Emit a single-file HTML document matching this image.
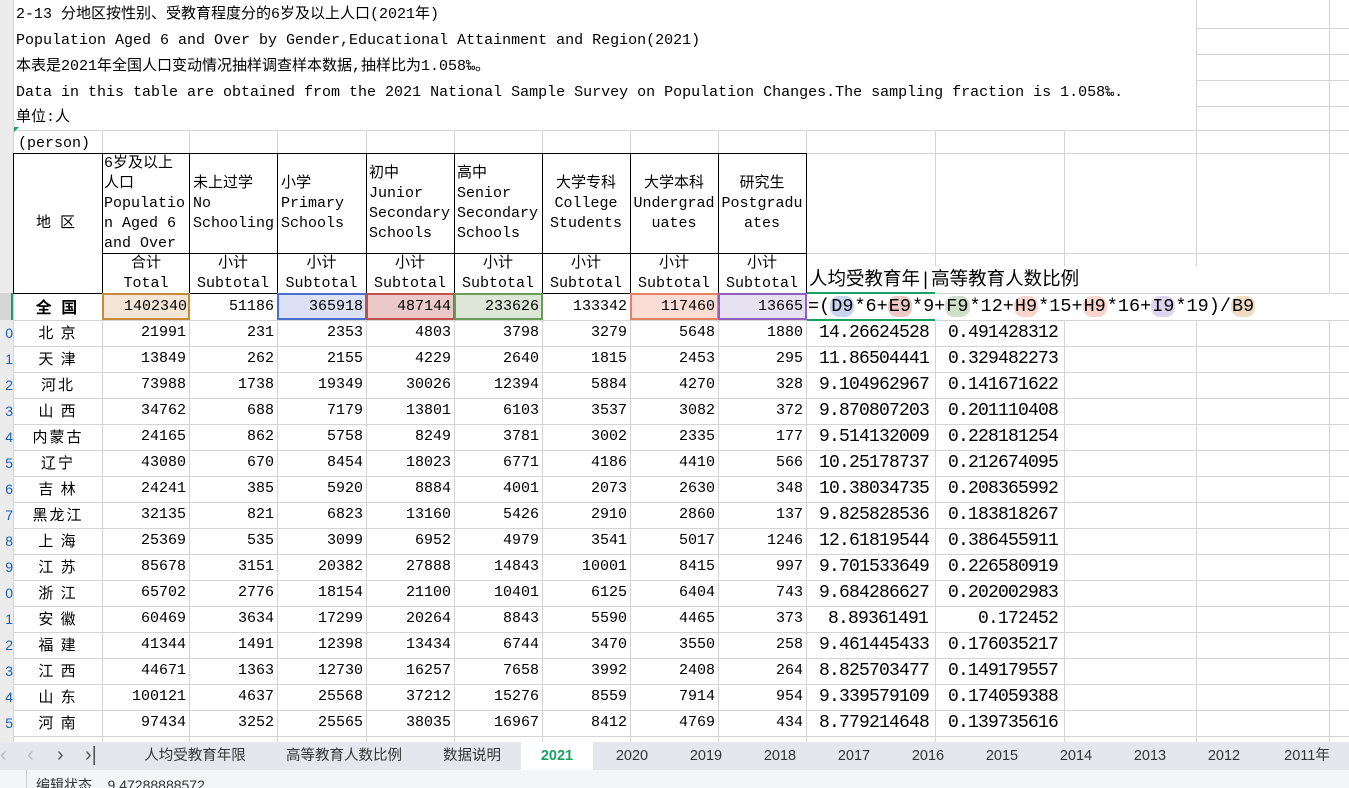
<!DOCTYPE html>
<html><head><meta charset="utf-8">
<style>
*{margin:0;padding:0;box-sizing:border-box}
body{width:1349px;height:788px;overflow:hidden;background:#fff;position:relative;font-family:"Liberation Mono","Noto Sans CJK SC",monospace;font-size:15px;color:#000}
.vl{position:absolute;top:0;width:1px;height:742px;background:#d4d4d4}
.hl{position:absolute;left:0;width:1349px;height:1px;background:#d4d4d4}
.t{position:absolute;white-space:nowrap;line-height:26px}
.c{position:absolute;white-space:nowrap;text-align:right;padding-right:3px;line-height:26px;height:26px}
.bk{position:absolute;background:#000}
.rn{position:absolute;left:0;width:13px;background:#ececec;overflow:hidden;font-family:"Liberation Sans",sans-serif;font-size:14px;color:#1a5fb4;text-align:right;line-height:26px;height:26px}
.hd{position:absolute;white-space:nowrap;line-height:20px;font-size:15px}
.f{font-size:18.5px;font-family:"Liberation Mono","Noto Sans CJK SC",monospace}
.p{border-radius:9px;padding:0 1px}
.tab{position:absolute;top:742px;height:28px;line-height:28px;font-family:"Liberation Sans","Noto Sans CJK SC",sans-serif;font-size:14.5px;color:#333;text-align:center}
table{border-collapse:collapse;table-layout:fixed;width:1045px}
td{height:26px;padding:0 3px;text-align:right;white-space:nowrap;line-height:26px;overflow:visible}
td:first-child{text-align:center;font-family:"Noto Sans CJK SC",sans-serif;font-size:15px;letter-spacing:2px}
td.j{font-size:18px;text-align:left;padding-left:13px;letter-spacing:-0.8px}
td.k{font-size:18px;padding-right:6px;letter-spacing:-0.8px}
</style></head><body>
<div class="vl" style="left:13px"></div><div class="vl" style="left:102px"></div><div class="vl" style="left:189px"></div><div class="vl" style="left:277px"></div><div class="vl" style="left:366px"></div><div class="vl" style="left:454px"></div><div class="vl" style="left:542px"></div><div class="vl" style="left:630px"></div><div class="vl" style="left:718px"></div><div class="vl" style="left:806px"></div><div class="vl" style="left:935px"></div><div class="vl" style="left:1064px"></div><div class="vl" style="left:1196px"></div><div class="vl" style="left:1329px"></div>
<div class="hl" style="top:28px"></div><div class="hl" style="top:54px"></div><div class="hl" style="top:80px"></div><div class="hl" style="top:106px"></div><div class="hl" style="top:130px"></div><div class="hl" style="top:153px"></div><div class="hl" style="top:253px"></div><div class="hl" style="top:293px"></div>
<div class="hl" style="top:320px"></div><div class="hl" style="top:346px"></div><div class="hl" style="top:372px"></div><div class="hl" style="top:398px"></div><div class="hl" style="top:424px"></div><div class="hl" style="top:450px"></div><div class="hl" style="top:476px"></div><div class="hl" style="top:502px"></div><div class="hl" style="top:528px"></div><div class="hl" style="top:554px"></div><div class="hl" style="top:580px"></div><div class="hl" style="top:606px"></div><div class="hl" style="top:632px"></div><div class="hl" style="top:658px"></div><div class="hl" style="top:684px"></div><div class="hl" style="top:710px"></div><div class="hl" style="top:736px"></div>
<div style="position:absolute;left:14px;top:0;width:1182px;height:130px;background:#fff"></div>
<div class="rn" style="top:0;height:742px"></div>
<div class="rn" style="top:293px;height:27px;background:#d6d6d6;border-right:2px solid #1aa260"></div>
<div class="rn" style="top:320px">0</div><div class="rn" style="top:346px">1</div><div class="rn" style="top:372px">2</div><div class="rn" style="top:398px">3</div><div class="rn" style="top:424px">4</div><div class="rn" style="top:450px">5</div><div class="rn" style="top:476px">6</div><div class="rn" style="top:502px">7</div><div class="rn" style="top:528px">8</div><div class="rn" style="top:554px">9</div><div class="rn" style="top:580px">0</div><div class="rn" style="top:606px">1</div><div class="rn" style="top:632px">2</div><div class="rn" style="top:658px">3</div><div class="rn" style="top:684px">4</div><div class="rn" style="top:710px">5</div>
<div class="t" style="left:16px;top:2px">2-13 分地区按性别、受教育程度分的6岁及以上人口(2021年)</div>
<div class="t" style="left:16px;top:28px">Population Aged 6 and Over by Gender,Educational Attainment and Region(2021)</div>
<div class="t" style="left:16px;top:54px">本表是2021年全国人口变动情况抽样调查样本数据,抽样比为1.058‰。</div>
<div class="t" style="left:16px;top:80px">Data in this table are obtained from the 2021 National Sample Survey on Population Changes.The sampling fraction is 1.058‰.</div>
<div class="t" style="left:16px;top:105px">单位:人</div>
<div style="position:absolute;left:14px;top:127px;width:0;height:0;border-top:5px solid #1aa260;border-right:5px solid transparent"></div>
<div class="t" style="left:18px;top:131px;height:22px;overflow:hidden">(person)</div>
<div style="position:absolute;left:14px;top:154px;width:792px;height:139px;background:#fff"></div>
<div class="bk" style="left:13px;top:153px;width:793px;height:1px"></div>
<div class="bk" style="left:102px;top:253px;width:704px;height:1px"></div>
<div class="bk" style="left:13px;top:293px;width:793px;height:1px"></div>
<div class="bk" style="left:13px;top:153px;width:1px;height:140px"></div>
<div class="bk" style="left:102px;top:153px;width:1px;height:140px"></div>
<div class="bk" style="left:189px;top:153px;width:1px;height:140px"></div>
<div class="bk" style="left:277px;top:153px;width:1px;height:140px"></div>
<div class="bk" style="left:366px;top:153px;width:1px;height:140px"></div>
<div class="bk" style="left:454px;top:153px;width:1px;height:140px"></div>
<div class="bk" style="left:542px;top:153px;width:1px;height:140px"></div>
<div class="bk" style="left:630px;top:153px;width:1px;height:140px"></div>
<div class="bk" style="left:718px;top:153px;width:1px;height:140px"></div>
<div class="bk" style="left:806px;top:153px;width:1px;height:140px"></div>
<div class="hd" style="left:36px;top:214px">地 区</div>
<div class="hd" style="left:104px;top:154px">6岁及以上<br>人口<br>Populatio<br>n Aged 6<br>and Over</div>
<div class="hd" style="left:193px;top:174px">未上过学<br>No<br>Schooling</div>
<div class="hd" style="left:281px;top:174px">小学<br>Primary<br>Schools</div>
<div class="hd" style="left:369px;top:164px">初中<br>Junior<br>Secondary<br>Schools</div>
<div class="hd" style="left:457px;top:164px">高中<br>Senior<br>Secondary<br>Schools</div>
<div class="hd" style="left:542px;width:88px;text-align:center;top:174px">大学专科<br>College<br>Students</div>
<div class="hd" style="left:630px;width:88px;text-align:center;top:174px">大学本科<br>Undergrad<br>uates</div>
<div class="hd" style="left:718px;width:88px;text-align:center;top:174px">研究生<br>Postgradu<br>ates</div>
<div class="hd" style="left:102px;width:88px;text-align:center;top:254px">合计<br>Total</div>
<div class="hd" style="left:189px;width:88px;text-align:center;top:254px">小计<br>Subtotal</div>
<div class="hd" style="left:277px;width:89px;text-align:center;top:254px">小计<br>Subtotal</div>
<div class="hd" style="left:366px;width:88px;text-align:center;top:254px">小计<br>Subtotal</div>
<div class="hd" style="left:454px;width:88px;text-align:center;top:254px">小计<br>Subtotal</div>
<div class="hd" style="left:542px;width:88px;text-align:center;top:254px">小计<br>Subtotal</div>
<div class="hd" style="left:630px;width:88px;text-align:center;top:254px">小计<br>Subtotal</div>
<div class="hd" style="left:718px;width:88px;text-align:center;top:254px">小计<br>Subtotal</div>
<div style="position:absolute;left:807px;top:266px;width:400px;height:27px;background:#fff"></div>
<div class="t f" style="left:809px;top:268px">人均受教育年|高等教育人数比例</div>
<div style="position:absolute;left:807px;top:292px;width:128px;height:2px;background:#1aa260"></div>
<div style="position:absolute;left:102px;top:293px;width:88px;height:27px;background:#f3e6d6;border:2px solid #c8893a"></div>
<div style="position:absolute;left:277px;top:293px;width:90px;height:27px;background:#dce1f3;border:2px solid #4a6fcc"></div>
<div style="position:absolute;left:366px;top:293px;width:89px;height:27px;background:#ebc9c9;border:2px solid #c0504d"></div>
<div style="position:absolute;left:454px;top:293px;width:89px;height:27px;background:#dde7d8;border:2px solid #6a9a5a"></div>
<div style="position:absolute;left:630px;top:293px;width:89px;height:27px;background:#f9ddd4;border:2px solid #e58060"></div>
<div style="position:absolute;left:718px;top:293px;width:89px;height:27px;background:#e6e0f0;border:2px solid #9060c0"></div>
<div style="position:absolute;left:807px;top:294px;width:542px;height:26px;background:#fff"></div>
<div style="position:absolute;left:807px;top:319px;width:128px;height:2px;background:#1aa260"></div>
<div class="t f" style="left:808px;top:294px">=(<span class="p" style="background:#c9d3f0">D9</span>*6+<span class="p" style="background:#eec8c4">E9</span>*9+<span class="p" style="background:#cfdfc9">F9</span>*12+<span class="p" style="background:#f8d5cc">H9</span>*15+<span class="p" style="background:#f8d5cc">H9</span>*16+<span class="p" style="background:#ddd4ef">I9</span>*19)/<span class="p" style="background:#f0dcc4">B9</span></div>
<div style="position:absolute;left:14px;top:293px;width:88px;line-height:27px;text-align:center;font-weight:bold;font-family:'Noto Sans CJK SC',sans-serif;font-size:16px;letter-spacing:3px">全 国</div>
<div class="c" style="left:102px;top:294px;width:88px">1402340</div><div class="c" style="left:189px;top:294px;width:88px">51186</div><div class="c" style="left:277px;top:294px;width:89px">365918</div><div class="c" style="left:366px;top:294px;width:88px">487144</div><div class="c" style="left:454px;top:294px;width:88px">233626</div><div class="c" style="left:542px;top:294px;width:88px">133342</div><div class="c" style="left:630px;top:294px;width:88px">117460</div><div class="c" style="left:718px;top:294px;width:88px">13665</div>
<table style="position:absolute;left:14px;top:320px">
<colgroup><col style="width:88px"><col style="width:87px"><col style="width:88px"><col style="width:89px"><col style="width:88px"><col style="width:88px"><col style="width:88px"><col style="width:88px"><col style="width:88px"><col style="width:129px"><col style="width:129px"></colgroup>
<tr><td>北 京</td><td>21991</td><td>231</td><td>2353</td><td>4803</td><td>3798</td><td>3279</td><td>5648</td><td>1880</td><td class="j">14.26624528</td><td class="k">0.491428312</td></tr>
<tr><td>天 津</td><td>13849</td><td>262</td><td>2155</td><td>4229</td><td>2640</td><td>1815</td><td>2453</td><td>295</td><td class="j">11.86504441</td><td class="k">0.329482273</td></tr>
<tr><td>河北</td><td>73988</td><td>1738</td><td>19349</td><td>30026</td><td>12394</td><td>5884</td><td>4270</td><td>328</td><td class="j">9.104962967</td><td class="k">0.141671622</td></tr>
<tr><td>山 西</td><td>34762</td><td>688</td><td>7179</td><td>13801</td><td>6103</td><td>3537</td><td>3082</td><td>372</td><td class="j">9.870807203</td><td class="k">0.201110408</td></tr>
<tr><td>内蒙古</td><td>24165</td><td>862</td><td>5758</td><td>8249</td><td>3781</td><td>3002</td><td>2335</td><td>177</td><td class="j">9.514132009</td><td class="k">0.228181254</td></tr>
<tr><td>辽宁</td><td>43080</td><td>670</td><td>8454</td><td>18023</td><td>6771</td><td>4186</td><td>4410</td><td>566</td><td class="j">10.25178737</td><td class="k">0.212674095</td></tr>
<tr><td>吉 林</td><td>24241</td><td>385</td><td>5920</td><td>8884</td><td>4001</td><td>2073</td><td>2630</td><td>348</td><td class="j">10.38034735</td><td class="k">0.208365992</td></tr>
<tr><td>黑龙江</td><td>32135</td><td>821</td><td>6823</td><td>13160</td><td>5426</td><td>2910</td><td>2860</td><td>137</td><td class="j">9.825828536</td><td class="k">0.183818267</td></tr>
<tr><td>上 海</td><td>25369</td><td>535</td><td>3099</td><td>6952</td><td>4979</td><td>3541</td><td>5017</td><td>1246</td><td class="j">12.61819544</td><td class="k">0.386455911</td></tr>
<tr><td>江 苏</td><td>85678</td><td>3151</td><td>20382</td><td>27888</td><td>14843</td><td>10001</td><td>8415</td><td>997</td><td class="j">9.701533649</td><td class="k">0.226580919</td></tr>
<tr><td>浙 江</td><td>65702</td><td>2776</td><td>18154</td><td>21100</td><td>10401</td><td>6125</td><td>6404</td><td>743</td><td class="j">9.684286627</td><td class="k">0.202002983</td></tr>
<tr><td>安 徽</td><td>60469</td><td>3634</td><td>17299</td><td>20264</td><td>8843</td><td>5590</td><td>4465</td><td>373</td><td class="j" style="padding-left:22px">8.89361491</td><td class="k">0.172452</td></tr>
<tr><td>福 建</td><td>41344</td><td>1491</td><td>12398</td><td>13434</td><td>6744</td><td>3470</td><td>3550</td><td>258</td><td class="j">9.461445433</td><td class="k">0.176035217</td></tr>
<tr><td>江 西</td><td>44671</td><td>1363</td><td>12730</td><td>16257</td><td>7658</td><td>3992</td><td>2408</td><td>264</td><td class="j">8.825703477</td><td class="k">0.149179557</td></tr>
<tr><td>山 东</td><td>100121</td><td>4637</td><td>25568</td><td>37212</td><td>15276</td><td>8559</td><td>7914</td><td>954</td><td class="j">9.339579109</td><td class="k">0.174059388</td></tr>
<tr><td>河 南</td><td>97434</td><td>3252</td><td>25565</td><td>38035</td><td>16967</td><td>8412</td><td>4769</td><td>434</td><td class="j">8.779214648</td><td class="k">0.139735616</td></tr>
</table>
<div style="position:absolute;left:0;top:742px;width:1349px;height:28px;background:#e6e7ec"></div>
<div style="position:absolute;left:0;top:742px;width:110px;height:28px;font-family:'Liberation Sans',sans-serif;font-size:20px;color:#555;line-height:26px"><span style="position:absolute;left:0;color:#bbb">‹</span><span style="position:absolute;left:27px;color:#bbb">‹</span><span style="position:absolute;left:57px">›</span><span style="position:absolute;left:85px">›|</span></div>
<div class="tab" style="left:125px;width:140px">人均受教育年限</div>
<div class="tab" style="left:270px;width:148px">高等教育人数比例</div>
<div class="tab" style="left:425px;width:94px">数据说明</div>
<div class="tab" style="left:521px;width:72px;background:#fff;color:#1aa260;font-weight:bold">2021</div>
<div class="tab" style="left:597px;width:70px">2020</div>
<div class="tab" style="left:671px;width:70px">2019</div>
<div class="tab" style="left:745px;width:70px">2018</div>
<div class="tab" style="left:819px;width:70px">2017</div>
<div class="tab" style="left:893px;width:70px">2016</div>
<div class="tab" style="left:967px;width:70px">2015</div>
<div class="tab" style="left:1041px;width:70px">2014</div>
<div class="tab" style="left:1115px;width:70px">2013</div>
<div class="tab" style="left:1189px;width:70px">2012</div>
<div class="tab" style="left:1265px;width:84px">2011年</div>
<div style="position:absolute;left:0;top:770px;width:1349px;height:18px;background:#f4f5f7;overflow:hidden">
<div style="position:absolute;left:26px;top:0;width:1px;height:18px;background:#ccc"></div>
<div style="position:absolute;left:36px;top:5px;font-family:'Liberation Sans','Noto Sans CJK SC',sans-serif;font-size:14px;color:#333;line-height:20px">编辑状态&nbsp;&nbsp;&nbsp;&nbsp;9.47288888572</div>
</div>
</body></html>
